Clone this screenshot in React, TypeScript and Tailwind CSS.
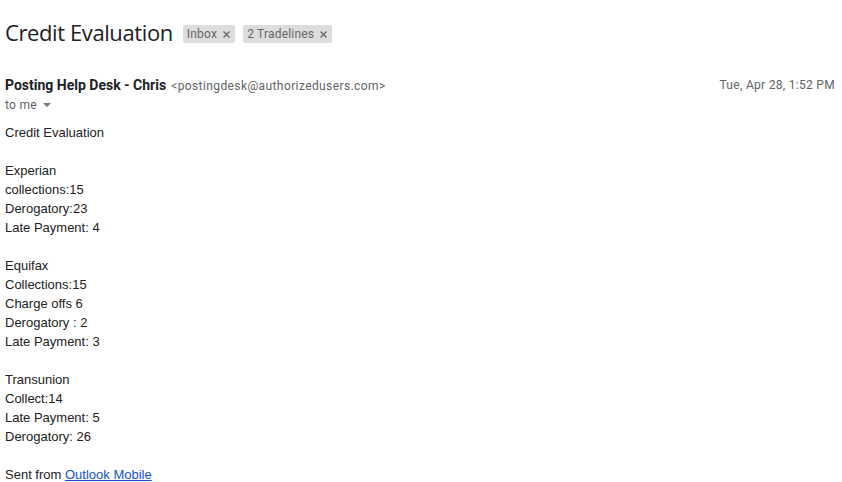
export default function App() {
  const lines = [
    "Credit Evaluation",
    "",
    "Experian",
    "collections:15",
    "Derogatory:23",
    "Late Payment: 4",
    "",
    "Equifax",
    "Collections:15",
    "Charge offs 6",
    "Derogatory : 2",
    "Late Payment: 3",
    "",
    "Transunion",
    "Collect:14",
    "Late Payment: 5",
    "Derogatory: 26",
    "",
  ]

  const x = (
    <svg width="7" height="7" viewBox="0 0 7 7" className="ml-[6px] mt-[1px]">
      <path d="M0.5 0.5 L6.5 6.5 M6.5 0.5 L0.5 6.5" stroke="#666" strokeWidth="1.3" />
    </svg>
  )

  return (
    <div className="w-[842px] h-[482px] bg-white overflow-hidden font-['Roboto',sans-serif]">
      <div className="flex items-center pl-[5px] pt-[17px] h-[46px]">
        <h1 className="text-[22px] leading-[28px] text-[#202124] font-['Open_Sans',sans-serif] tracking-[-0.4px]">
          Credit Evaluation
        </h1>
        <div className="flex items-center gap-[8px] ml-[10px] mt-[4px]">
          <span className="flex items-center h-[18px] pl-[4px] pr-[5px] bg-[#dddddd] rounded-[2px] text-[12px] text-[#666666] tracking-[0.2px]">
            Inbox {x}
          </span>
          <span className="flex items-center h-[18px] pl-[4px] pr-[5px] bg-[#dddddd] rounded-[2px] text-[12px] text-[#666666] tracking-[0.2px]">
            2 Tradelines {x}
          </span>
        </div>
      </div>

      <div className="flex items-center justify-between pl-[5px] pr-[7px] mt-[29px] h-[20px]">
        <div className="flex items-baseline">
          <span className="text-[14px] font-bold text-[#202124]">Posting Help Desk - Chris</span>
          <span className="ml-[5px] text-[12px] text-[#5f6368] tracking-[0.4px]">&lt;postingdesk@authorizedusers.com&gt;</span>
        </div>
        <span className="text-[12px] text-[#5f6368] tracking-[0.3px]">Tue, Apr 28, 1:52 PM</span>
      </div>

      <div className="flex items-center pl-[5px] h-[19px] pt-[1px] text-[12px] text-[#5f6368] tracking-[0.3px]">
        to me
        <svg width="8" height="4" viewBox="0 0 8 4" className="ml-[6px]">
          <path d="M0 0 L8 0 L4 4 Z" fill="#777" />
        </svg>
      </div>

      <div className="pl-[5px] pt-[9px] text-[13px] leading-[19px] text-[#222222] font-['Liberation_Sans',Arial,sans-serif]">
        {lines.map((l, i) => (
          <div key={i} className="h-[19px]">
            {l}
          </div>
        ))}
        <div>
          Sent from <a href="#" className="text-[#1155cc] underline">Outlook Mobile</a>
        </div>
      </div>
    </div>
  )
}
